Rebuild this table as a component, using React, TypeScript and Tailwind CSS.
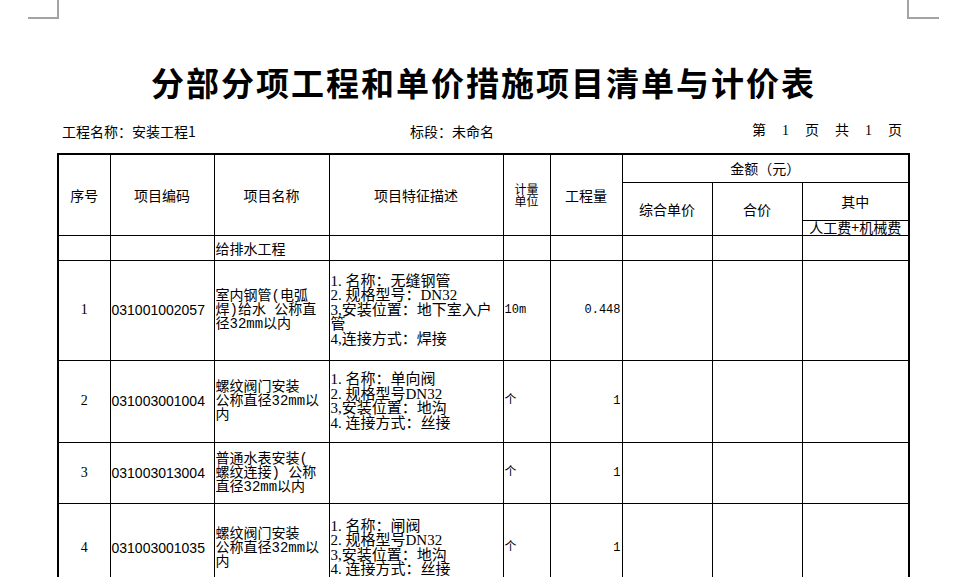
import React from 'react';

const cjk = '"Noto Sans CJK SC", "Liberation Sans", sans-serif';
const songish = '"Liberation Serif", "Noto Sans CJK SC", serif';
const mono = '"Liberation Mono", "Noto Sans CJK SC", monospace';

type Item = {
  no: string;
  code: string;
  name: string[];
  desc: string[];
  unit: string;
  qty: string;
  h: string;
};

const items: Item[] = [
  {
    no: '1',
    code: '031001002057',
    name: ['室内钢管(电弧', '焊)给水 公称直', '径32mm以内'],
    desc: ['1. 名称：无缝钢管', '2. 规格型号：DN32', '3,安装位置：地下室入户', '管', '4,连接方式：焊接'],
    unit: '10m',
    qty: '0.448',
    h: 'h-[100px]',
  },
  {
    no: '2',
    code: '031003001004',
    name: ['螺纹阀门安装', '公称直径32mm以', '内'],
    desc: ['1. 名称：单向阀', '2. 规格型号DN32', '3,安装位置：地沟', '4. 连接方式：丝接'],
    unit: '个',
    qty: '1',
    h: 'h-[82px]',
  },
  {
    no: '3',
    code: '031003013004',
    name: ['普通水表安装(', '螺纹连接) 公称', '直径32mm以内'],
    desc: [],
    unit: '个',
    qty: '1',
    h: 'h-[61px]',
  },
  {
    no: '4',
    code: '031003001035',
    name: ['螺纹阀门安装', '公称直径32mm以', '内'],
    desc: ['1. 名称：闸阀', '2. 规格型号DN32', '3,安装位置：地沟', '4. 连接方式：丝接'],
    unit: '个',
    qty: '1',
    h: 'h-[90px]',
  },
];

const td = 'border border-black p-0 align-middle';
const th = 'border border-black p-0 align-middle font-normal text-center';

function Lines({ lines }: { lines: string[] }) {
  return (
    <>
      {lines.map((l, i) => (
        <div key={i} className="whitespace-nowrap">
          {l}
        </div>
      ))}
    </>
  );
}

export default function App() {
  return (
    <div className="relative w-[955px] h-[577px] overflow-hidden bg-white text-black" style={{ fontFamily: cjk }}>
      {/* crop marks */}
      <div className="absolute left-[57px] top-0 w-[2px] h-[19px] bg-[#a3a3a3]" />
      <div className="absolute left-[28px] top-[17px] w-[31px] h-[2px] bg-[#a3a3a3]" />
      <div className="absolute left-[907px] top-0 w-[2px] h-[19px] bg-[#a3a3a3]" />
      <div className="absolute left-[907px] top-[17px] w-[32px] h-[2px] bg-[#a3a3a3]" />

      <div className="ml-[57px] w-[851px] pt-[62px]">
        <h1 className="text-center text-[33px] leading-[40px] font-bold tracking-[2px] pl-[2px]">
          分部分项工程和单价措施项目清单与计价表
        </h1>

        <div className="mt-[20px] flex items-center h-[18px] text-[14px] leading-[18px]">
          <div className="w-[353px] pl-[5px]">工程名称：安装工程1</div>
          <div>标段：未命名</div>
          <div className="ml-auto pr-[6px] flex gap-[16px]" style={{ fontFamily: songish }}>
            <span>第</span>
            <span>1</span>
            <span>页</span>
            <span>共</span>
            <span>1</span>
            <span>页</span>
          </div>
        </div>

        <table className="mt-[13px] w-[851px] table-fixed border-collapse border-2 border-black text-[14px] leading-[14px]">
          <colgroup>
            <col className="w-[52px]" />
            <col className="w-[104px]" />
            <col className="w-[115px]" />
            <col className="w-[174px]" />
            <col className="w-[47px]" />
            <col className="w-[72px]" />
            <col className="w-[90px]" />
            <col className="w-[90px]" />
            <col className="w-[107px]" />
          </colgroup>
          <thead>
            <tr className="h-[28px]">
              <th rowSpan={3} className={th}>序号</th>
              <th rowSpan={3} className={th}>项目编码</th>
              <th rowSpan={3} className={th}>项目名称</th>
              <th rowSpan={3} className={th}>项目特征描述</th>
              <th rowSpan={3} className={`${th} text-[12px] leading-[12px]`}>
                计量
                <br />
                单位
              </th>
              <th rowSpan={3} className={th}>工程量</th>
              <th colSpan={3} className={th}>金额（元）</th>
            </tr>
            <tr className="h-[38px]">
              <th rowSpan={2} className={th}>综合单价</th>
              <th rowSpan={2} className={th}>合价</th>
              <th className={th}>其中</th>
            </tr>
            <tr className="h-[15px]">
              <th className={`${th} text-[14px] leading-[13px] whitespace-nowrap`}>人工费+机械费</th>
            </tr>
          </thead>
          <tbody>
            <tr className="h-[25px]">
              <td className={td} />
              <td className={td} />
              <td className={`${td} pl-[1px]`}>给排水工程</td>
              <td className={td} />
              <td className={td} />
              <td className={td} />
              <td className={td} />
              <td className={td} />
              <td className={td} />
            </tr>
            {items.map((it) => (
              <tr key={it.no} className={it.h}>
                <td className={`${td} text-center`} style={{ fontFamily: songish }}>{it.no}</td>
                <td className={`${td} pl-[1px]`} style={{ fontFamily: '"Liberation Sans", sans-serif' }}>
                  {it.code}
                </td>
                <td className={`${td} pl-[1px]`} style={{ fontFamily: mono }}>
                  <Lines lines={it.name} />
                </td>
                <td className={`${td} pl-[1px] text-[15px] leading-[14.5px]`} style={{ fontFamily: songish }}>
                  <Lines lines={it.desc} />
                </td>
                <td className={`${td} pl-[1px] text-[12px]`} style={{ fontFamily: mono }}>{it.unit}</td>
                <td className={`${td} pr-[1px] text-right text-[12px]`} style={{ fontFamily: mono }}>{it.qty}</td>
                <td className={td} />
                <td className={td} />
                <td className={td} />
              </tr>
            ))}
          </tbody>
        </table>
      </div>
    </div>
  );
}
